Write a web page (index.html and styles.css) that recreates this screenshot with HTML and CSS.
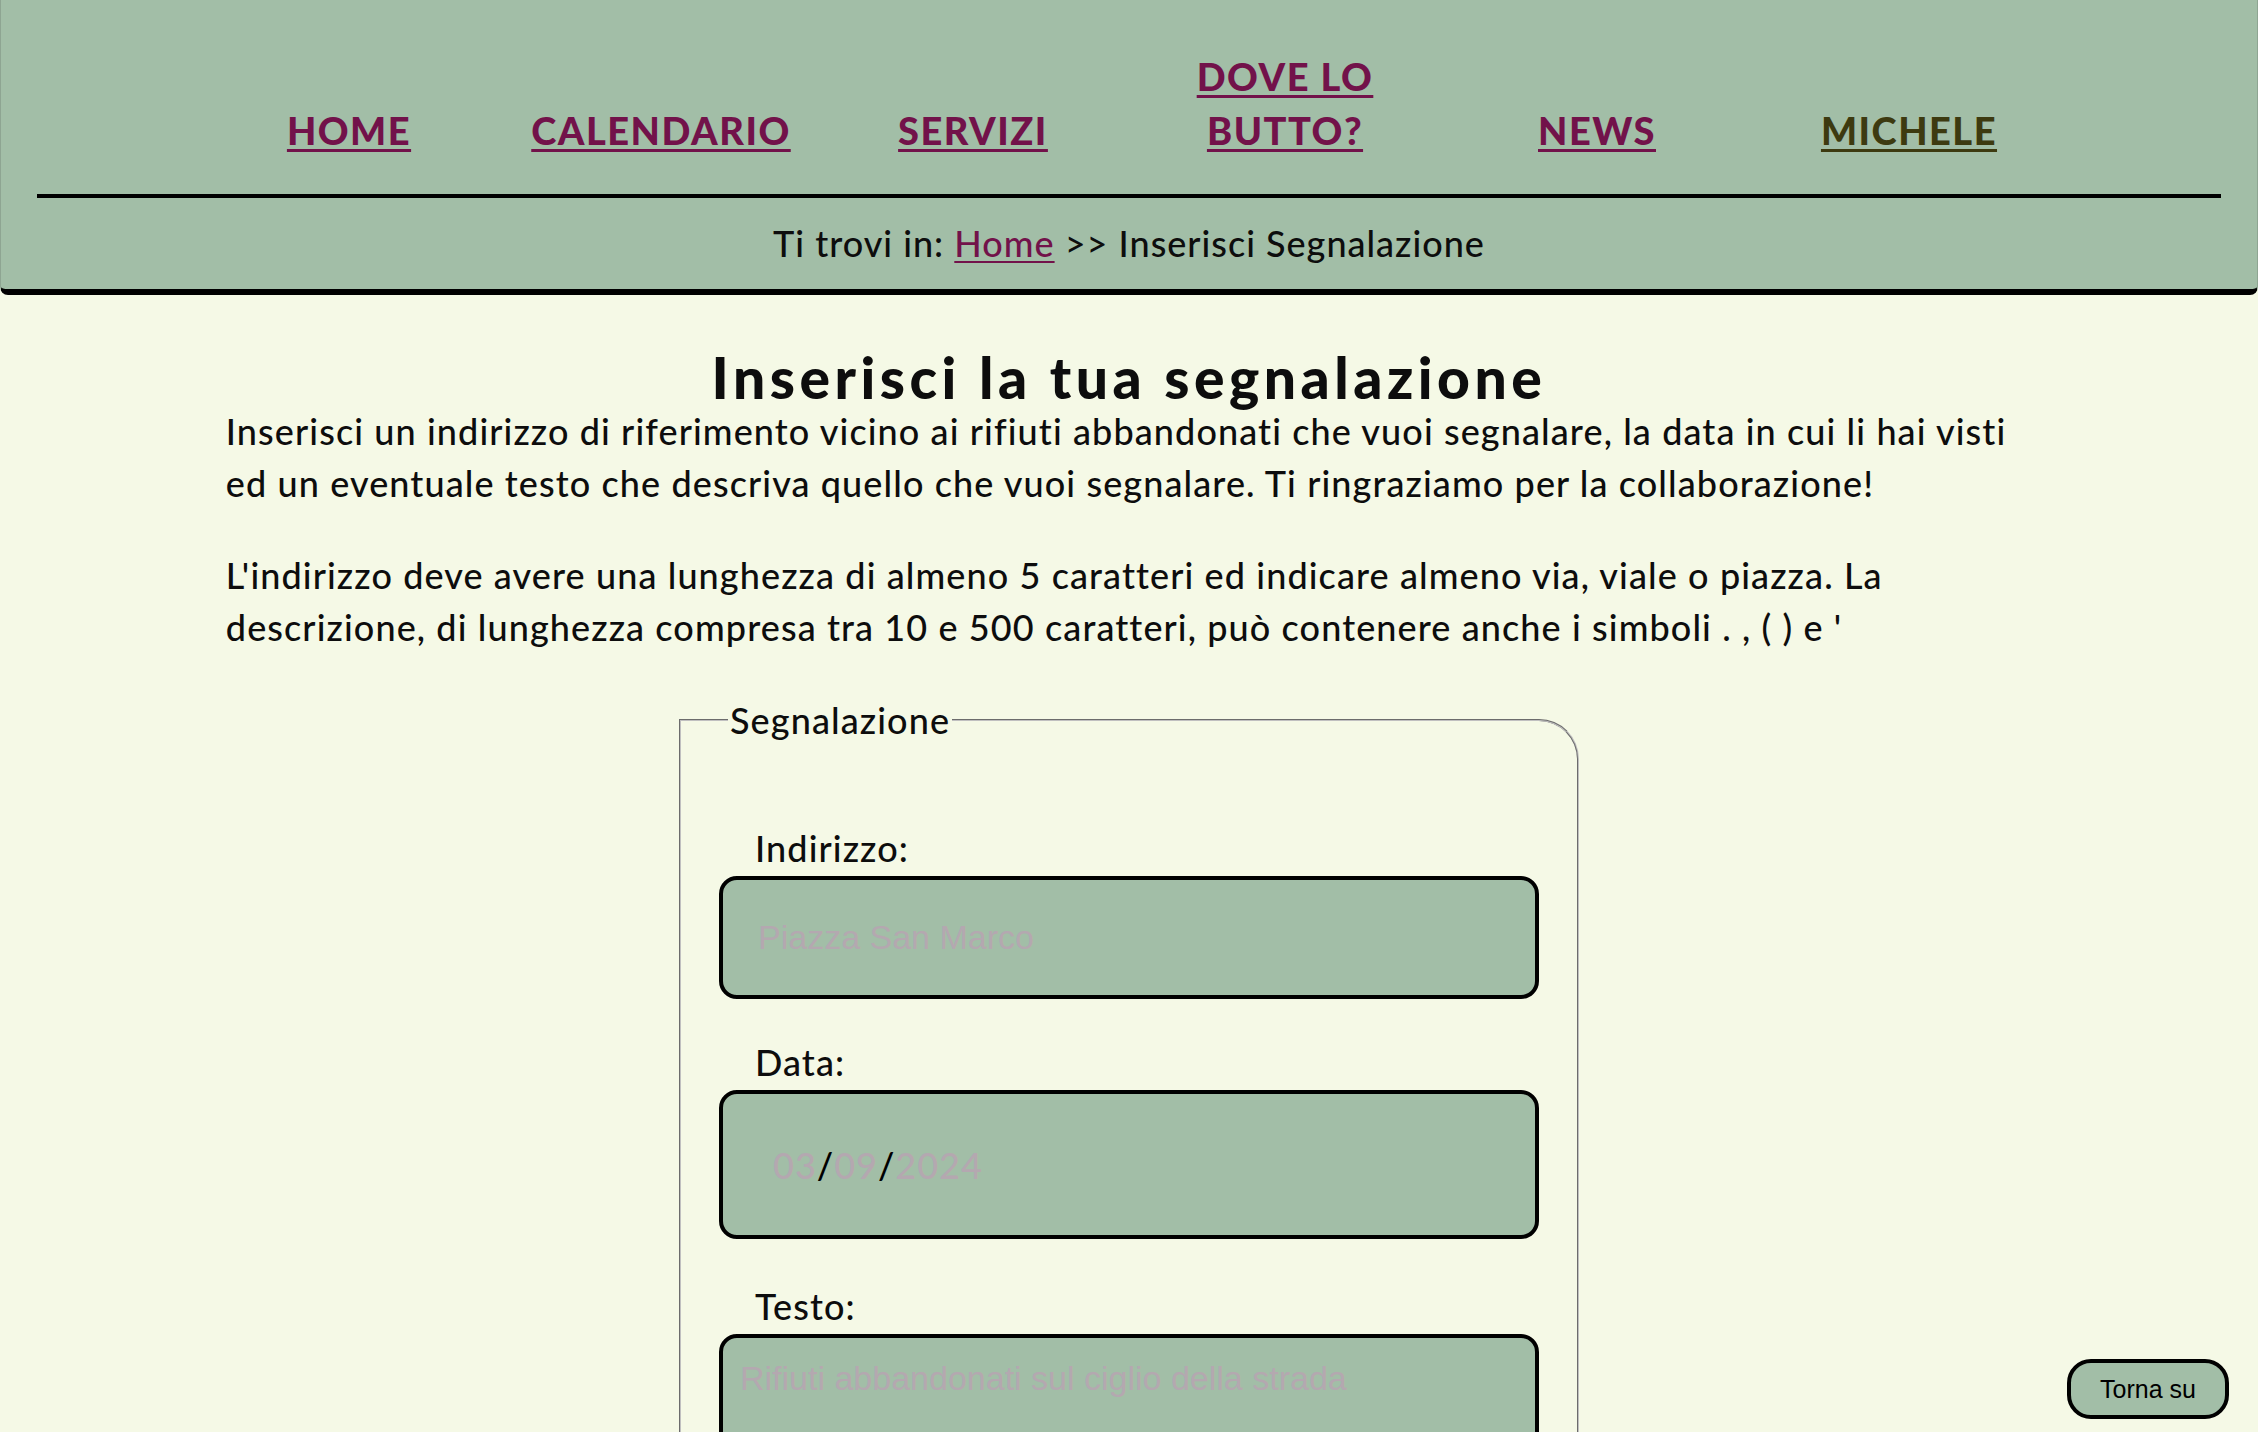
FILE: index.html
```html
<!DOCTYPE html>
<html lang="it">
<head>
<meta charset="utf-8">
<title>Inserisci Segnalazione</title>
<link rel="stylesheet" href="styles.css">
</head>
<body>
<header class="site-header">
  <nav class="main-nav">
    <ul class="nav-list">
      <li class="nav-item"><a class="nav-link" href="#">HOME</a></li>
      <li class="nav-item"><a class="nav-link" href="#">CALENDARIO</a></li>
      <li class="nav-item"><a class="nav-link" href="#">SERVIZI</a></li>
      <li class="nav-item"><a class="nav-link nav-link-wrap" href="#">DOVE LO BUTTO?</a></li>
      <li class="nav-item"><a class="nav-link" href="#">NEWS</a></li>
      <li class="nav-item"><a class="nav-link nav-link-user" href="#">MICHELE</a></li>
    </ul>
  </nav>
  <div class="nav-rule"></div>
  <p class="breadcrumb">Ti trovi in: <a class="crumb-link" href="#">Home</a> &gt;&gt; Inserisci Segnalazione</p>
</header>

<main class="content">
  <h1 class="page-title">Inserisci la tua segnalazione</h1>
  <p class="intro">Inserisci un indirizzo di riferimento vicino ai rifiuti abbandonati che vuoi segnalare, la data in cui li hai visti ed un eventuale testo che descriva quello che vuoi segnalare. Ti ringraziamo per la collaborazione!</p>
  <p class="intro">L'indirizzo deve avere una lunghezza di almeno 5 caratteri ed indicare almeno via, viale o piazza. La descrizione, di lunghezza compresa tra 10 e 500 caratteri, può contenere anche i simboli . , ( ) e '</p>

  <form class="report-form" action="#">
    <fieldset class="report-fieldset">
      <legend class="report-legend">Segnalazione</legend>
      <div class="field">
        <label class="field-label" for="indirizzo">Indirizzo:</label>
        <input class="field-input" id="indirizzo" type="text" placeholder="Piazza San Marco">
      </div>
      <div class="field">
        <label class="field-label" for="data">Data:</label>
        <div class="field-input date-input" id="data" tabindex="0"><span class="date-part">03</span><span class="date-sep">/</span><span class="date-part">09</span><span class="date-sep">/</span><span class="date-part">2024</span></div>
      </div>
      <div class="field field-last">
        <label class="field-label" for="testo">Testo:</label>
        <textarea class="field-input field-textarea" id="testo" placeholder="Rifiuti abbandonati sul ciglio della strada"></textarea>
      </div>
    </fieldset>
  </form>
</main>

<a class="back-top" href="#">Torna su</a>
</body>
</html>
```

FILE: styles.css
```css
html, body {
  margin: 0;
  padding: 0;
}

body {
  background: #f5f9e6;
  color: #0d0d0d;
  font-family: Lato, "Liberation Sans", sans-serif;
  font-size: 36px;
  letter-spacing: 1.1px;
}

.site-header {
  background: #a2bea7;
  border: 1px solid #8ea592;
  border-top: none;
  border-bottom: 6px solid #000;
  border-radius: 0 0 8px 8px;
}

.main-nav {
  padding-top: 49px;
}

.nav-list {
  list-style: none;
  margin: 0 auto;
  padding: 0;
  width: 1872px;
  display: grid;
  grid-template-columns: repeat(6, 1fr);
  align-items: end;
}

.nav-item {
  text-align: center;
  line-height: 54px;
}

.nav-link {
  font-weight: 900;
  font-size: 38px;
  letter-spacing: 1.5px;
  color: #72124a;
  text-decoration: underline;
  text-decoration-thickness: 3px;
  text-underline-offset: 4px;
}

.nav-link-wrap {
  display: inline-block;
  max-width: 220px;
}

.nav-link-user {
  color: #3d3a10;
}

.nav-rule {
  margin: 36px 36px 0;
  border-top: 4px solid #000;
}

.breadcrumb {
  margin: 0;
  padding: 18px 0 19px;
  text-align: center;
  line-height: 54px;
  font-weight: 500;
  letter-spacing: 1px;
}

.crumb-link {
  color: #72124a;
  text-decoration-thickness: 2px;
  text-underline-offset: 4px;
}

.content {
  margin: 0 10%;
  padding-top: 54px;
}

.page-title {
  margin: 0;
  text-align: center;
  font-size: 57px;
  line-height: 56px;
  font-weight: 900;
  letter-spacing: 4.5px;
}

.intro {
  margin: 0 0 40px;
  line-height: 52px;
  font-weight: 500;
}

.report-form {
  margin: 0;
}

.report-fieldset {
  width: 820px;
  margin: 0 auto;
  padding: 38px 38px 40px 38px;
  border: 2px groove #c0c0c0;
  border-radius: 0 40px 0 0;
}

.report-legend {
  margin-left: 9px;
  padding: 0 2px;
  line-height: 54px;
  font-weight: 500;
}

.field {
  display: flex;
  flex-direction: column;
  margin-top: 36px;
}

.field-last {
  margin-top: 40px;
}

.field-label {
  display: block;
  padding-left: 36px;
  line-height: 54px;
  font-weight: 500;
}

.field-input {
  box-sizing: border-box;
  width: 100%;
  margin: 1px 0 0;
  background: #a2bea7;
  border: 4px solid #000;
  border-radius: 18px;
  color: #000;
  font-family: "Liberation Sans", Arial, sans-serif;
  font-size: 34px;
  letter-spacing: 0;
  outline: none;
}

input.field-input {
  height: 123px;
  padding: 0 35px;
}

.field-input::placeholder {
  color: #b4a8b0;
  opacity: 1;
}

.date-input {
  height: 149px;
  padding: 0 0 0 50px;
  display: flex;
  align-items: center;
  font-family: Lato, "Liberation Sans", sans-serif;
  font-size: 36px;
  font-weight: 500;
  letter-spacing: 1px;
}

.date-part {
  color: #b4a8b0;
}

.date-sep {
  color: #000;
}

.field-textarea {
  display: block;
  height: 320px;
  padding: 21px 17px;
  resize: none;
  line-height: normal;
}

.back-top {
  position: fixed;
  right: 29px;
  bottom: 13px;
  box-sizing: border-box;
  width: 162px;
  height: 60px;
  display: flex;
  align-items: center;
  justify-content: center;
  background: #a2bea7;
  border: 4px solid #000;
  border-radius: 24px;
  color: #000;
  text-decoration: none;
  font-family: "Liberation Sans", Arial, sans-serif;
  font-size: 25px;
  letter-spacing: 0;
}
```
